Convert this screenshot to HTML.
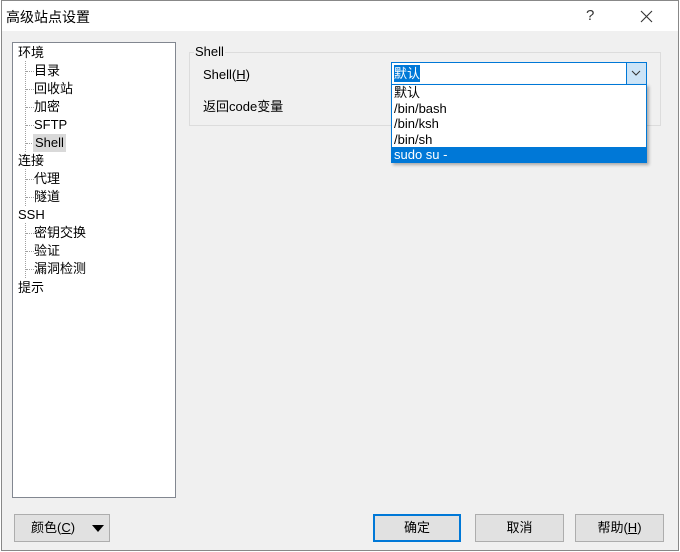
<!DOCTYPE html>
<html><head><meta charset="utf-8"><style>
*{margin:0;padding:0;box-sizing:border-box}
body{width:680px;height:552px;background:#fff;font-family:"Liberation Sans","Noto Sans CJK SC",sans-serif;font-size:13px;color:#000;position:relative;overflow:hidden}
.win{position:absolute;left:1px;top:0;width:678px;height:551px;border:1px solid #888;background:#f0f0f0}
.title{position:absolute;left:0;top:0;width:100%;height:30px;background:#fff}
.abs{position:absolute;white-space:nowrap}
.tree{position:absolute;left:10px;top:41px;width:164px;height:456px;background:#fff;border:1px solid #828790}
.ti{position:absolute;line-height:18px;height:18px}
.vl{position:absolute;border-left:1px dotted #a0a0a0;width:0}
.hl{position:absolute;border-top:1px dotted #a0a0a0;height:0;width:8px}
.btn{position:absolute;height:28px;border:1px solid #adadad;background:#e1e1e1;text-align:center;line-height:26px}
</style></head><body>
<div class="win">
<div class="title">
<div class="abs" style="left:4px;top:6px;font-size:14px">高级站点设置</div>
<div class="abs" style="left:584px;top:6px;font-size:15px;color:#333">?</div>
<svg class="abs" style="left:638px;top:9px" width="13" height="13"><path d="M1 1L12 12M12 1L1 12" stroke="#333" stroke-width="1.1"/></svg>
</div>
<div class="tree">
<div class="vl" style="left:12px;top:18px;height:91px"></div>
<div class="vl" style="left:12px;top:126px;height:37px"></div>
<div class="vl" style="left:12px;top:180px;height:55px"></div>
<div class="hl" style="left:13px;top:28px"></div><div class="hl" style="left:13px;top:46px"></div><div class="hl" style="left:13px;top:64px"></div><div class="hl" style="left:13px;top:82px"></div><div class="hl" style="left:13px;top:100px"></div>
<div class="hl" style="left:13px;top:136px"></div><div class="hl" style="left:13px;top:154px"></div>
<div class="hl" style="left:13px;top:190px"></div><div class="hl" style="left:13px;top:208px"></div><div class="hl" style="left:13px;top:226px"></div>
<div class="ti" style="left:5px;top:1px">环境</div>
<div class="ti" style="left:21px;top:19px">目录</div>
<div class="ti" style="left:21px;top:37px">回收站</div>
<div class="ti" style="left:21px;top:55px">加密</div>
<div class="ti" style="left:21px;top:73px">SFTP</div>
<div class="ti" style="left:20px;top:91px;background:#d9d9d9;padding:0 2px">Shell</div>
<div class="ti" style="left:5px;top:109px">连接</div>
<div class="ti" style="left:21px;top:127px">代理</div>
<div class="ti" style="left:21px;top:145px">隧道</div>
<div class="ti" style="left:5px;top:163px">SSH</div>
<div class="ti" style="left:21px;top:181px">密钥交换</div>
<div class="ti" style="left:21px;top:199px">验证</div>
<div class="ti" style="left:21px;top:217px">漏洞检测</div>
<div class="ti" style="left:5px;top:236px">提示</div>
</div>
<div class="abs" style="left:187px;top:51px;width:472px;height:74px;border:1px solid #dcdcdc"></div>
<div class="abs" style="left:192px;top:43px;background:#f0f0f0;padding:0 1px">Shell</div>
<div class="abs" style="left:201px;top:66px">Shell(<u>H</u>)</div>
<div class="abs" style="left:201px;top:95px">返回code变量</div>
<div class="abs" style="left:389px;top:61px;width:256px;height:23px;background:#fff;border:1px solid #0078d7">
<span class="abs" style="left:2px;top:2px;background:#0078d7;color:#fff;line-height:17px">默认</span>
<div class="abs" style="right:0;top:0;width:20px;height:21px;background:#cce4f7;border-left:1px solid #0078d7"></div>
<svg class="abs" style="right:5px;top:7px" width="10" height="7"><path d="M1 1L5 5L9 1" stroke="#333" fill="none"/></svg>
</div>
<div class="abs" style="left:389px;top:83px;width:256px;height:79px;background:#fff;border:1px solid #0078d7;box-shadow:2px 2px 3px rgba(0,0,0,.3);line-height:15.5px">
<div style="padding-left:2px">默认</div>
<div style="padding-left:2px">/bin/bash</div>
<div style="padding-left:2px">/bin/ksh</div>
<div style="padding-left:2px">/bin/sh</div>
<div style="padding-left:2px;background:#0078d7;color:#fff;height:16px">sudo su -</div>
</div>
<div class="btn" style="left:12px;top:513px;width:96px;text-align:left;padding-left:16px">颜色(<u>C</u>)<svg class="abs" style="left:77px;top:10px" width="12" height="7"><path d="M0 0H12L6 7Z" fill="#000"/></svg></div>
<div class="btn" style="left:371px;top:513px;width:88px;border:2px solid #0078d7;line-height:24px">确定</div>
<div class="btn" style="left:473px;top:513px;width:89px">取消</div>
<div class="btn" style="left:573px;top:513px;width:89px">帮助(<u>H</u>)</div>
</div>
</body></html>
